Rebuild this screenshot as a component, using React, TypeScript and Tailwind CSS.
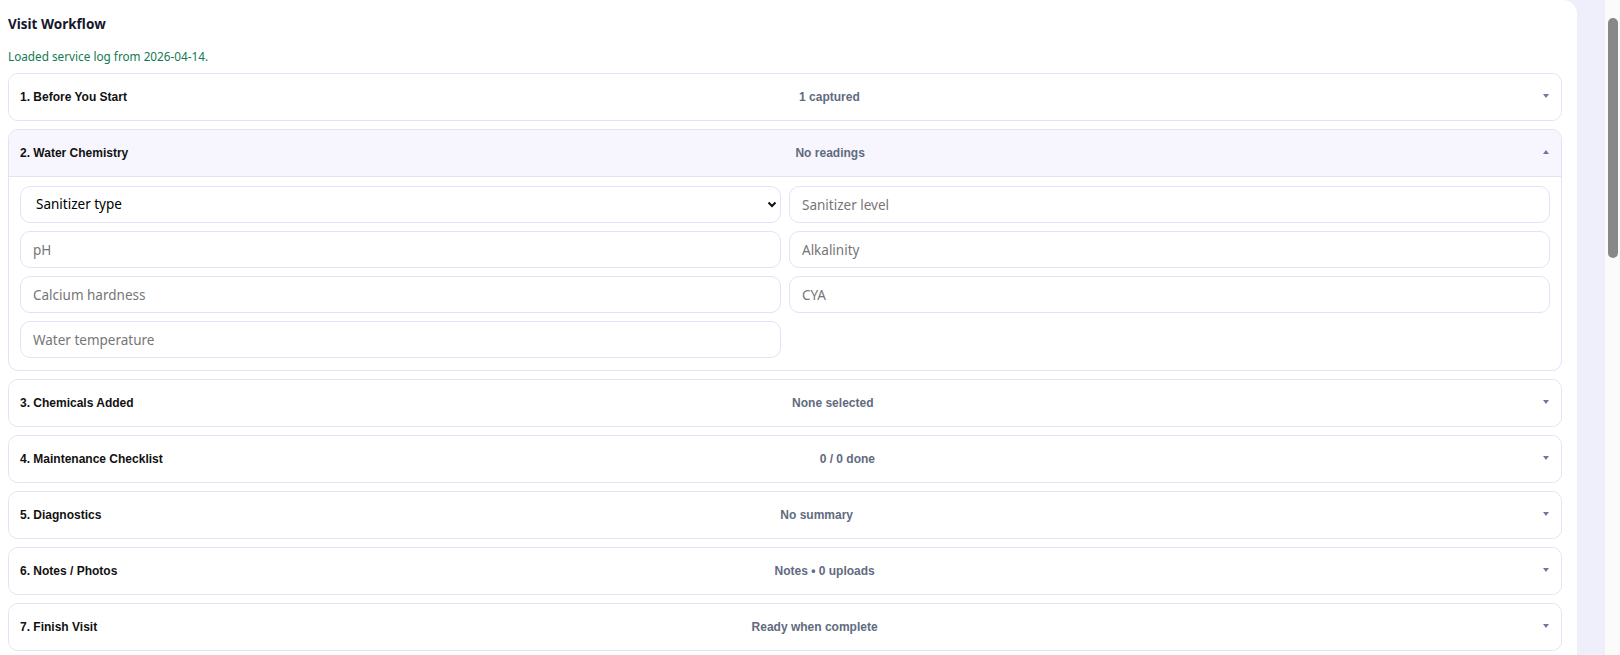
import React from "react";

type Section = { title: string; summary: string; open?: boolean };

const sections: Section[] = [
  { title: "1. Before You Start", summary: "1 captured" },
  { title: "2. Water Chemistry", summary: "No readings", open: true },
  { title: "3. Chemicals Added", summary: "None selected" },
  { title: "4. Maintenance Checklist", summary: "0 / 0 done" },
  { title: "5. Diagnostics", summary: "No summary" },
  { title: "6. Notes / Photos", summary: "Notes \u2022 0 uploads" },
  { title: "7. Finish Visit", summary: "Ready when complete" },
];

function Caret({ up }: { up?: boolean }) {
  return (
    <span className="flex w-[17px] shrink-0 justify-end pb-[2px]">
      <svg width="6" height="4" viewBox="0 0 6 4">
        {up ? (
          <polygon points="0,4 6,4 3,0" fill="#7474a6" />
        ) : (
          <polygon points="0,0 6,0 3,4" fill="#7474a6" />
        )}
      </svg>
    </span>
  );
}

const inputCls =
  "h-[37px] w-full rounded-[10px] border border-[#e3e1f5] bg-white px-3 text-[13.5px] text-black placeholder:text-[#767676] outline-none";

function ChemistryForm() {
  return (
    <div className="grid grid-cols-2 gap-x-2 gap-y-2 px-[11px] pt-[9px] pb-[12px]">
      <div className="relative">
        <select
          className={inputCls + " appearance-none pl-[15px] text-black"}
          defaultValue=""
        >
          <option value="">Sanitizer type</option>
          <option>Chlorine</option>
          <option>Salt</option>
          <option>Bromine</option>
        </select>
        <svg
          width="10"
          height="7"
          viewBox="0 0 10 7"
          className="pointer-events-none absolute right-[4px] top-[15px]"
        >
          <path d="M1.5 1.5 L5 5 L8.5 1.5" stroke="#111" strokeWidth="2" fill="none" />
        </svg>
      </div>
      <input className={inputCls} placeholder="Sanitizer level" />
      <input className={inputCls} placeholder="pH" />
      <input className={inputCls} placeholder="Alkalinity" />
      <input className={inputCls} placeholder="Calcium hardness" />
      <input className={inputCls} placeholder="CYA" />
      <input className={inputCls} placeholder="Water temperature" />
    </div>
  );
}

export default function App() {
  return (
    <div
      className="flex h-[655px] overflow-hidden bg-[#efeefb]"
      style={{ fontFamily: '"Noto Sans", "Open Sans", sans-serif' }}
    >
      <div className="min-w-0 flex-1 pr-[28px]">
        <div className="h-[900px] rounded-tr-[14px] bg-white pl-2 pr-[15px] pt-[14px]">
          <h2 className="text-[13.5px] font-bold leading-[20px] text-[#16162a]">
            Visit Workflow
          </h2>
          <p className="mt-[14px] text-[11.75px] leading-[16px] text-[#137a52]">
            Loaded service log from 2026-04-14.
          </p>
          <div className="mt-[9px] flex flex-col gap-2">
            {sections.map((s) => (
              <div
                key={s.title}
                className="overflow-hidden rounded-[10px] border border-[#e3e1f5] bg-white"
              >
                <button
                  className={
                    "flex w-full items-center justify-between pl-[11px] pr-3 text-[12px] font-bold " +
                    (s.open
                      ? "h-[47px] border-b border-[#e3e1f5] bg-[#f7f6fe]"
                      : "h-[46px] bg-white")
                  }
                  style={{ fontFamily: '"Liberation Sans", Arial, sans-serif' }}
                >
                  <span className="text-[#111]">{s.title}</span>
                  <span className="text-[#5f6b80]">{s.summary}</span>
                  <Caret up={s.open} />
                </button>
                {s.open && <ChemistryForm />}
              </div>
            ))}
          </div>
        </div>
      </div>
      <div className="flex w-[15px] shrink-0 justify-center bg-[#fbfbfb] pt-[18px]">
        <div className="ml-[1px] h-[240px] w-[10px] rounded-full bg-[#888888]" />
      </div>
    </div>
  );
}
